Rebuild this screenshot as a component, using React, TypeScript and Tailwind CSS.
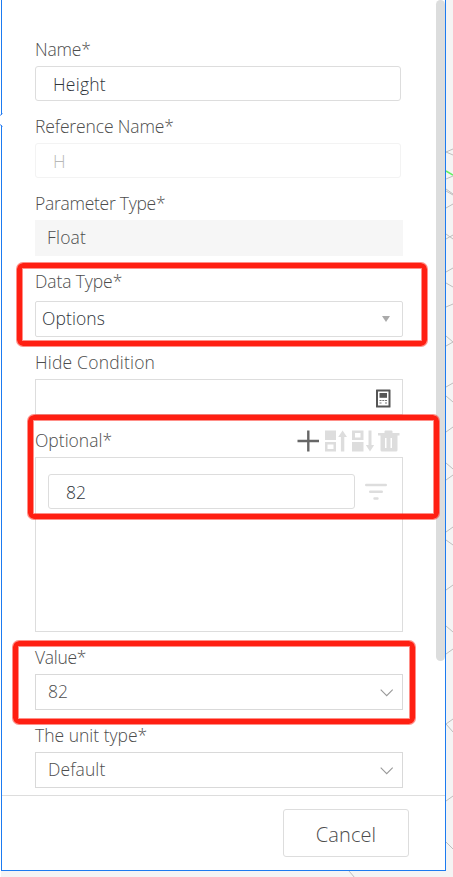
import { FC, ReactNode } from 'react'
import clsx from 'clsx'

interface FieldProps {
  label: string
  labelClass?: string
  className?: string
  actions?: ReactNode
  children: ReactNode
}

const Field: FC<FieldProps> = ({ label, labelClass, className, actions, children }) => (
  <div className={clsx('mb-2.5', className)}>
    <div className="flex h-8 items-center justify-between">
      <label className={clsx('pb-px whitespace-nowrap text-[#4d4d4d]', labelClass)}>{label}</label>
      {actions}
    </div>
    {children}
  </div>
)

const Highlight: FC<{ className: string }> = ({ className }) => (
  <div
    className={clsx(
      'absolute rounded-[6px] border-[5px] border-[#ff1f12] shadow-[0_0_0_1px_#ff1f1280,inset_0_0_0_1px_#ff1f1280]',
      className
    )}
  />
)

const ChevronIcon = () => (
  <svg className="mt-1 mr-2" width="15" height="10" viewBox="0 0 15 10" fill="none" stroke="#999" strokeWidth="1.1">
    <path d="M1.700 1.700 7.700 7.700l6-6" />
  </svg>
)

const CalculatorIcon = () => (
  <svg width="15" height="19" viewBox="0 0 15 19" fill="#555">
    <path fillRule="evenodd" d="M0 1Q0 .5.5.5h13.500q.5 0 .5.5v17q0 .5-.5.5H.5Q0 18.500 0 18ZM2 2.500v14h10.500v-14Z" />
    <path d="M3.500 4h7.500v4.800h-7.500z" />
    <path d="M3.500 11h2v1h-2zM6.300 11h2v1h-2zM9 11h2v1h-2zM3.500 13.500h2v1h-2zM9 13.500h2v1h-2z" opacity=".8" />
  </svg>
)

const OptionActions = () => (
  <svg className="mr-0.5" width="104" height="24" viewBox="0 0 104 24" fill="#ddd">
    <path d="M.5 12H22M11.300 1.500v21" stroke="#666" strokeWidth="2.400" />
    {/* move up */}
    <path d="M28 1.500h11v9.500H28z" />
    <path fillRule="evenodd" d="M28 13h11v9.500H28zM30.500 15.500v4.500h6v-4.500z" />
    <path d="M45.600 1.500 50 8h-2.700v14.500h-3.400V8h-2.700z" />
    {/* move down */}
    <path fillRule="evenodd" d="M55 1.500h11.500V11H55zM58 4v4.500h5.500V4z" />
    <path d="M55 13h11.500v9.500H55zM71.500 1.500h3V16h2.700L73 22.500 68.800 16h2.700z" />
    {/* delete */}
    <path fillRule="evenodd" d="M81 4h6.500V2.500q0-1 1-1h6q1 0 1 1V4h7v2.500H100.500v14.500q0 1.500-1.500 1.500H85q-1.500 0-1.500-1.500V6.500H81zM88 9v10h1.500V9zM93.500 9v10h1.500V9z" />
  </svg>
)

const FilterIcon = () => (
  <svg className="ml-2.5" width="22" height="18" viewBox="0 0 22 18" stroke="#ddd" strokeWidth="2.400" strokeLinecap="round">
    <path d="M1.200 2h19.600M5.200 8.800h11.600M9.500 15.500h3" />
  </svg>
)

const CanvasGrid = () => (
  <svg className="absolute inset-0" width="453" height="877" fill="none" stroke="#bdbdbd">
    <path d="M453 149l-7 3 7 3M446 179l7-3M446 191l7 4M446 189l7 5M446 208l7-4M446 234l7 5M446 239l7-4M446 272l7-4M446 283l7 4M446 307l7-3M446 336l7 6-7 4M446 387l7-4M446 396l7 6M446 432l7-5M446 463l7 6M446 480l7-5M446 532l7-5M446 540l7 5M446 590l7-5M446 626l7 6M446 654l7-5M453 719l-7 5 7 8M446 801l7-5M446 842l7 7M349 871l6 7" />
    <path d="M446 171l7 4" stroke="#62f062" strokeWidth="1.500" />
  </svg>
)

const App: FC = () => {
  return (
    <main className="relative h-[877px] w-[453px] overflow-hidden bg-[#f4f4f4] font-['Open_Sans','Noto_Sans',sans-serif] text-[17.5px] font-light text-[#4d4d4d]">
      <CanvasGrid />
      <div className="absolute top-0 left-0 h-[877px] w-px bg-white" />

      <section className="relative ml-px flex h-[871px] w-[445px] flex-col border-x border-b border-[#1d7bf0] bg-white">
        <div className="h-[795px] pt-[34px] pl-[33px]">
          <Field label="Name*" className="w-[366px]" labelClass="tracking-[-0.2px]">
            <div className="flex h-[35px] items-center rounded-[3px] border border-[#ddd] pt-0.5 pl-[17px] text-[#2f353b] tracking-[0.25px]">Height</div>
          </Field>
          <Field label="Reference Name*" className="w-[366px]" labelClass="tracking-[-0.13px]">
            <div className="flex h-[35px] items-center rounded-[3px] border border-[#f3f3f3] pt-0.5 pl-[17px] text-[#b8b8b8]">H</div>
          </Field>
          <Field label="Parameter Type*" className="w-[368px]" labelClass="tracking-[-0.27px]">
            <div className="flex h-9 items-center bg-[#f6f6f6] pb-0.5 pl-3 tracking-[0.2px]">Float</div>
          </Field>
          <Field label="Data Type*" className="w-[368px]" labelClass="tracking-[-0.1px]">
            <div className="mt-[3px] flex h-9 items-center justify-between rounded-[2px] border border-[#ddd] pl-1.5 text-[#2f353b] tracking-[0.1px]">
              <span className="pb-px">Options</span>
              <svg className="mr-3" width="8" height="6" viewBox="0 0 8 6" fill="#aaa">
                <path d="M0 0h8L4 6z" />
              </svg>
            </div>
          </Field>
          <Field label="Hide Condition" className="w-[368px]" labelClass="tracking-[0.2px]">
            <div className="flex h-9 items-center justify-end border border-[#ddd] pt-0.5 pr-[11px]">
              <CalculatorIcon />
            </div>
          </Field>
          <Field label="Optional*" className="w-[368px]" actions={<OptionActions />}>
            <div className="h-[175px] border border-[#ddd] pt-4 pl-3">
              <div className="flex items-center">
                <div className="flex h-[35px] w-[307px] items-center rounded-[3px] border border-[#ddd] pt-0.5 pl-[17px] text-[#2f353b]">82</div>
                <FilterIcon />
              </div>
            </div>
          </Field>
          <Field label="Value*" className="w-[368px]" labelClass="tracking-[-0.3px]">
            <div className="flex h-9 items-center justify-between border border-[#d9d9d9] pb-0.5 pl-3">
              82
              <ChevronIcon />
            </div>
          </Field>
          <Field label="The unit type*" className="w-[368px]">
            <div className="flex h-9 items-center justify-between border border-[#d9d9d9] pb-0.5 pl-3 tracking-[0.1px]">
              Default
              <ChevronIcon />
            </div>
          </Field>
        </div>

        <footer className="flex h-[75px] justify-end border-t border-[#ddd] pt-[13px] pr-9">
          <button className="h-12 w-[126px] rounded-[3px] border border-[#ddd] pt-1 text-xl font-light tracking-[0.1px]">Cancel</button>
        </footer>

        <div className="absolute top-0 right-0 h-[661px] w-[9px] rounded-full bg-[#dcdddd]" />
      </section>

      {/* break in the left edge */}
      <div className="absolute top-[115px] left-0 h-2.5 w-[3px] bg-white" />
      <svg className="absolute top-[112px] left-0" width="4" height="16" viewBox="0 0 4 16" fill="none" stroke="#3f88f3">
        <path d="M0 3.500 2.500 1.500M0 12.500l2.500 2" />
      </svg>

      <Highlight className="top-[263px] left-[17px] h-[83px] w-[410px]" />
      <Highlight className="top-[415px] left-[28px] h-[104px] w-[411px]" />
      <Highlight className="top-[641px] left-[13px] h-[83px] w-[402px]" />
    </main>
  )
}

export default App
